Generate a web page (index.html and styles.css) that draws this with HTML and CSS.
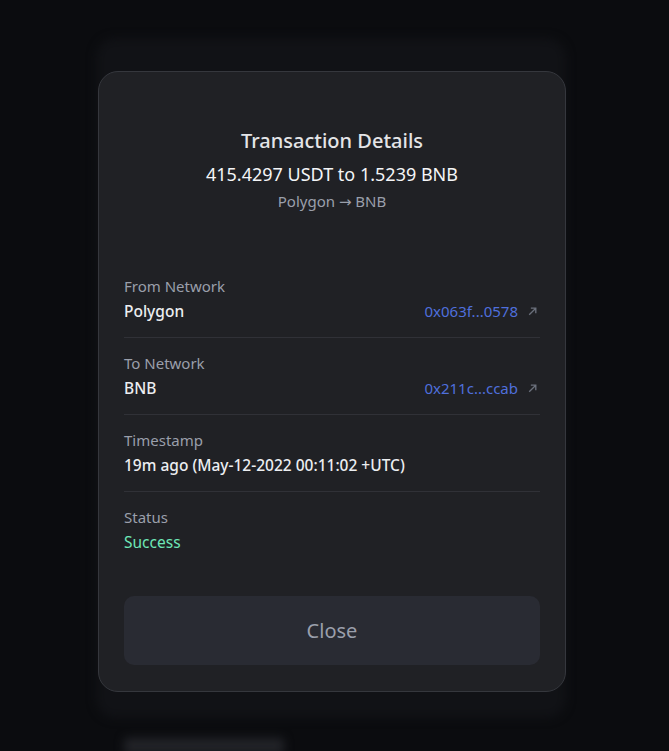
FILE: index.html
```html
<!DOCTYPE html>
<html lang="en">
<head>
  <meta charset="UTF-8">
  <meta name="viewport" content="width=device-width, initial-scale=1.0">
  <title>Transaction Details</title>
  <link rel="stylesheet" href="styles.css">
</head>
<body>
  <!-- page behind the dialog, blurred out -->
  <div class="page">
    <div class="page-card"></div>
    <div class="page-heading"></div>
  </div>

  <div class="overlay">
    <div class="modal">
      <div class="modal-head">
        <h2 class="title">Transaction Details</h2>
        <p class="amount">415.4297 USDT to 1.5239 BNB</p>
        <p class="route">Polygon <span class="arrow">→</span> BNB</p>
      </div>

      <div class="rows">
        <div class="row">
          <div class="label">From Network</div>
          <div class="line">
            <span class="value">Polygon</span>
            <a class="hash" href="#">0x063f...0578
              <svg class="ext" width="11" height="11" viewBox="0 0 10 10"><path d="M2 8L8 2M3.5 2H8V6.5" fill="none" stroke="currentColor" stroke-width="1.2"/></svg>
            </a>
          </div>
        </div>
        <div class="row">
          <div class="label">To Network</div>
          <div class="line">
            <span class="value">BNB</span>
            <a class="hash" href="#">0x211c...ccab
              <svg class="ext" width="11" height="11" viewBox="0 0 10 10"><path d="M2 8L8 2M3.5 2H8V6.5" fill="none" stroke="currentColor" stroke-width="1.2"/></svg>
            </a>
          </div>
        </div>
        <div class="row">
          <div class="label">Timestamp</div>
          <div class="line">
            <span class="value">19m ago (May-12-2022 00:11:02 +UTC)</span>
          </div>
        </div>
        <div class="row">
          <div class="label">Status</div>
          <div class="line">
            <span class="value success">Success</span>
          </div>
        </div>
      </div>

      <button class="close-btn">Close</button>
    </div>
  </div>
</body>
</html>
```

FILE: styles.css
```css
body {
  margin: 0;
  height: 751px;
  overflow: hidden;
  background: #0b0c0f;
  font-family: "Noto Sans", "Open Sans", sans-serif;
  position: relative;
}

.page {
  position: absolute;
  inset: 0;
  filter: blur(5px);
}
.page-card {
  position: absolute;
  left: 96px;
  top: 38px;
  width: 470px;
  height: 680px;
  border-radius: 20px;
  background: #111216;
}
.page-heading {
  position: absolute;
  left: 124px;
  top: 738px;
  width: 160px;
  height: 16px;
  border-radius: 4px;
  background: #222328;
}

.overlay {
  position: absolute;
  inset: 0;
}

.modal {
  box-sizing: border-box;
  width: 468px;
  margin: 71px 0 0 98px;
  padding: 55px 25px 26px;
  background: #202125;
  border: 1px solid #35373d;
  border-radius: 20px;
}

.modal-head {
  text-align: center;
}
.title {
  margin: 0;
  font-size: 20px;
  line-height: 28px;
  font-weight: 500;
  color: #e4e5e8;
}
.amount {
  margin: 6px 0 0;
  font-size: 18px;
  line-height: 26px;
  color: #f4f5f7;
}
.route {
  margin: 4px 0 0;
  font-size: 15px;
  line-height: 20px;
  color: #9a9fab;
}
.route .arrow {
  font-family: "DejaVu Sans", sans-serif;
  font-size: 15px;
}

.rows {
  margin-top: 49px;
}
.row {
  padding: 14px 0 15px;
  border-bottom: 1px solid #303137;
}
.row:last-child {
  border-bottom: none;
}
.label {
  font-size: 15px;
  line-height: 22px;
  color: #9a9fab;
}
.line {
  margin-top: 3px;
  display: flex;
  justify-content: space-between;
  align-items: center;
  font-size: 15.5px;
  line-height: 22px;
}
.value {
  color: #eceef1;
  font-weight: 500;
}
.value.success {
  color: #6ee7b7;
  font-weight: 400;
}
.hash {
  display: flex;
  align-items: center;
  gap: 9px;
  font-size: 15px;
  color: #4f6fdc;
  text-decoration: none;
  padding-right: 2px;
}
.ext {
  color: #6b707c;
}

.close-btn {
  display: block;
  width: 100%;
  height: 69px;
  margin-top: 28px;
  border: none;
  border-radius: 10px;
  background: #292b33;
  color: #9a9fab;
  font-family: inherit;
  font-size: 20px;
}
```
